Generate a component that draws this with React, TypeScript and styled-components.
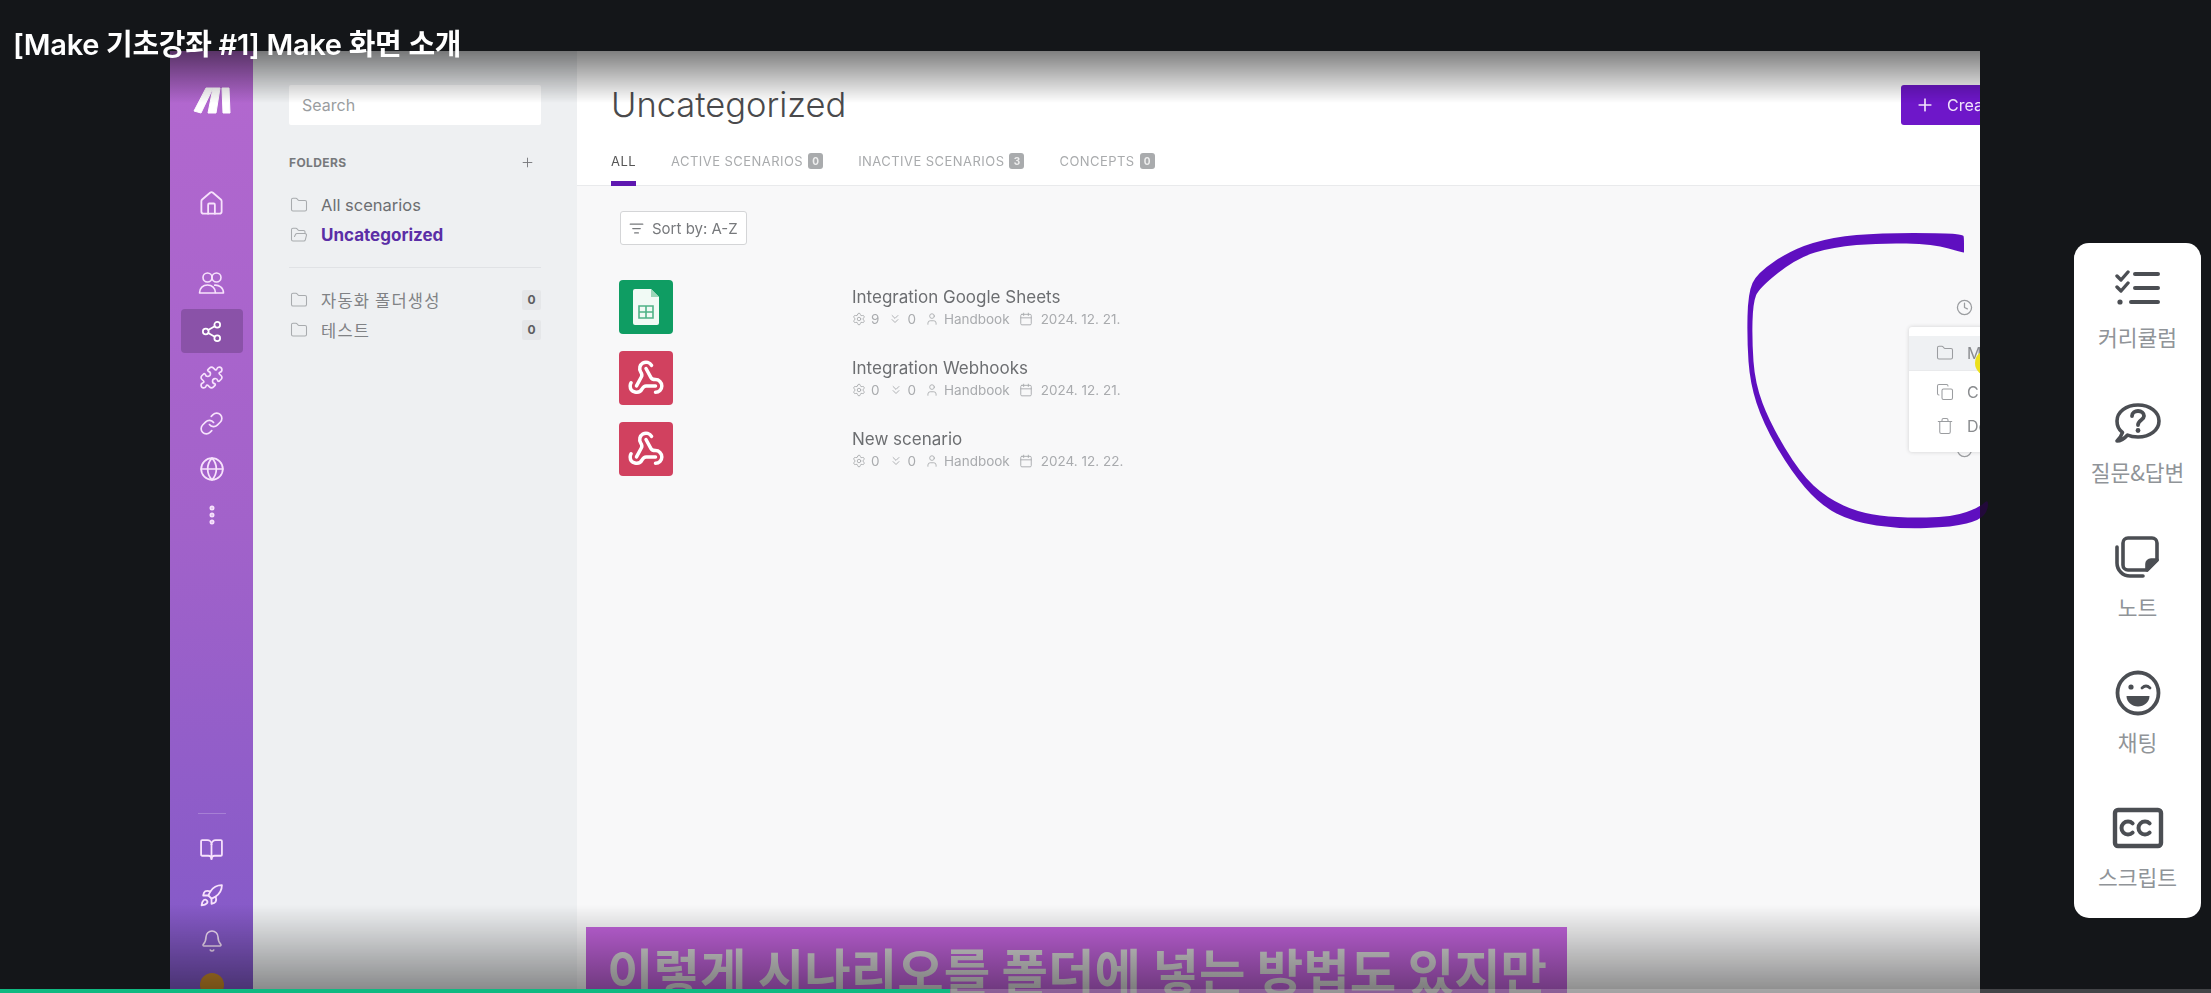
import React from 'react'
import styled, { createGlobalStyle } from 'styled-components'
import {
  BookOpen,
  Bell,
  Calendar,
  ChevronsDown,
  Clock,
  Copy,
  EllipsisVertical,
  Folder,
  FolderOpen,
  Globe,
  Home,
  Link,
  ListFilter,
  Plus,
  Puzzle,
  Rocket,
  Settings,
  Share2,
  Trash,
  User,
  Webhook,
} from 'lucide-react'

const UI_FONT = `Inter, "Noto Sans CJK KR", sans-serif`
const KR_FONT = `"Noto Sans CJK KR", "Noto Sans", sans-serif`

const GlobalStyle = createGlobalStyle`
  html, body {
    margin: 0;
    padding: 0;
    height: 100%;
    background: #141619;
    overflow: hidden;
  }
  * {
    box-sizing: border-box;
  }
`

const Page = styled.div`
  position: relative;
  display: flex;
  align-items: flex-start;
  width: 2211px;
  height: 993px;
  padding: 51px 0 0 170px;
  background: #141619;
  overflow: hidden;
`

const LessonTitle = styled.h1`
  position: absolute;
  z-index: 5;
  top: 26px;
  left: 13px;
  margin: 0;
  font-family: ${UI_FONT};
  font-size: 29px;
  line-height: 38px;
  font-weight: 600;
  letter-spacing: -0.3px;
  color: #fff;
`

const VideoFrame = styled.div`
  position: relative;
  flex: none;
  display: flex;
  width: 1810px;
  height: 942px;
  background: #f8f8f9;
  overflow: hidden;
`

const Blurred = styled.div`
  display: flex;
  width: 100%;
  height: 100%;
  filter: blur(0.6px);
`

const TopShade = styled.div`
  position: absolute;
  z-index: 3;
  top: 0;
  left: 0;
  right: 0;
  height: 52px;
  background: linear-gradient(to bottom, rgba(0, 0, 0, 0.5), rgba(0, 0, 0, 0));
`

const BottomShade = styled.div`
  position: absolute;
  z-index: 3;
  bottom: 0;
  left: 0;
  right: 0;
  height: 88px;
  background: linear-gradient(to bottom, rgba(0, 0, 0, 0), rgba(0, 0, 0, 0.44));
`

const Nav = styled.nav`
  flex: none;
  display: flex;
  flex-direction: column;
  align-items: center;
  width: 83px;
  height: 946px;
  padding-top: 36px;
  background: linear-gradient(to bottom, #b368cf 0%, #a262ca 50%, #8159c8 100%);
`

const LogoMark = styled.svg`
  display: block;
  width: 38px;
  height: 27px;
  margin-bottom: 67px;
`

const NavItem = styled.div<{ $active?: boolean; $gapAfter?: number }>`
  display: flex;
  align-items: center;
  justify-content: center;
  flex: none;
  width: 62px;
  height: 44px;
  margin-bottom: ${({ $gapAfter }) => $gapAfter ?? 2}px;
  border-radius: 4px;
  color: ${({ $active }) => ($active ? '#fff' : '#f7e2fc')};
  background: ${({ $active }) => ($active ? '#8a52a8' : 'transparent')};
`

const NavBottom = styled.div`
  margin-top: auto;
  display: flex;
  flex-direction: column;
  align-items: center;
`

const NavRule = styled.div`
  width: 28px;
  height: 1px;
  margin-bottom: 13px;
  background: rgba(255, 255, 255, 0.22);
`

const Avatar = styled.div`
  width: 24px;
  height: 24px;
  margin-top: 8px;
  border-radius: 50%;
  background: #c98a2a;
`

const FolderPanel = styled.aside`
  flex: none;
  width: 324px;
  padding: 34px 36px 0;
  background: #eef0f2;
  font-family: ${UI_FONT};
`

const SearchBox = styled.div`
  height: 40px;
  padding: 0 13px;
  border-radius: 2px;
  background: #fff;
  font-size: 16px;
  line-height: 40px;
  color: #9a9da0;
`

const FolderHead = styled.div`
  display: flex;
  align-items: center;
  justify-content: space-between;
  height: 20px;
  margin: 27px 0 18px;
  padding-right: 6px;
  font-size: 12px;
  font-weight: 700;
  letter-spacing: 0.4px;
  color: #77797c;
`

const FolderRow = styled.div<{ $active?: boolean }>`
  display: flex;
  align-items: center;
  gap: 13px;
  height: 30px;
  padding-left: 1px;
  font-size: ${({ $active }) => ($active ? 17 : 16.5)}px;
  font-weight: ${({ $active }) => ($active ? 700 : 400)};
  color: ${({ $active }) => ($active ? '#5a2ea6' : '#6c6e71')};
  & > svg {
    flex: none;
    color: #a8abae;
  }
`

const FolderName = styled.span`
  flex: 1;
  font-family: ${KR_FONT};
  font-weight: 400;
  font-size: 16.5px;
  letter-spacing: 1.2px;
  color: #808285;
`

const FolderCount = styled.span`
  width: 19px;
  height: 20px;
  border-radius: 2px;
  background: #e5e7e9;
  font-size: 12px;
  font-weight: 700;
  line-height: 20px;
  text-align: center;
  color: #5c5e61;
`

const PanelRule = styled.div`
  height: 1px;
  margin: 17px 0 17px;
  background: #e0e2e5;
`

const Main = styled.main`
  position: relative;
  flex: 1;
  min-width: 0;
  display: flex;
  flex-direction: column;
  font-family: ${UI_FONT};
`

const Header = styled.header`
  flex: none;
  height: 135px;
  padding: 34px 0 0 34px;
  background: #fff;
  border-bottom: 1px solid #e9eaec;
`

const HeaderTop = styled.div`
  display: flex;
  align-items: center;
  justify-content: space-between;
`

const PageTitle = styled.h2`
  margin: 0;
  font-size: 34.5px;
  line-height: 40px;
  font-weight: 300;
  color: #4a4a4c;
`

const CreateButton = styled.div`
  flex: none;
  display: flex;
  align-items: center;
  gap: 12px;
  width: 240px;
  height: 40px;
  margin-right: -161px;
  padding-left: 14px;
  border-radius: 3px;
  background: #6e17c9;
  font-size: 16px;
  white-space: nowrap;
  color: #f1e4fb;
`

const Tabs = styled.div`
  display: flex;
  gap: 35px;
  margin-top: 15px;
  height: 46px;
`

const Tab = styled.div<{ $active?: boolean }>`
  display: flex;
  align-items: flex-start;
  gap: 5px;
  height: 46px;
  padding-top: 12px;
  border-bottom: 5px solid ${({ $active }) => ($active ? '#5e17b0' : 'transparent')};
  font-size: 13px;
  line-height: 18px;
  letter-spacing: 0.45px;
  color: ${({ $active }) => ($active ? '#555' : '#a9abad')};
`

const TabCount = styled.span`
  width: 15px;
  height: 16px;
  margin-top: 1px;
  border-radius: 3px;
  background: #a9abad;
  font-size: 10px;
  font-weight: 700;
  line-height: 16px;
  letter-spacing: 0;
  text-align: center;
  color: #eee;
`

const Content = styled.section`
  flex: 1;
  padding: 25px 7px 0 42px;
  background: #f8f8f9;
`

const SortButton = styled.div`
  display: flex;
  align-items: center;
  gap: 8px;
  width: 127px;
  height: 34px;
  margin-left: 1px;
  padding-left: 8px;
  border: 1px solid #d4d5d7;
  border-radius: 3px;
  background: #fff;
  font-size: 15px;
  white-space: nowrap;
  color: #77797c;
`

const ScenarioList = styled.div`
  display: flex;
  flex-direction: column;
  gap: 17px;
  margin-top: 35px;
`

const ScenarioRow = styled.div`
  display: flex;
  align-items: center;
  height: 54px;
`

const AppTile = styled.div<{ $color: string }>`
  flex: none;
  display: flex;
  align-items: center;
  justify-content: center;
  width: 54px;
  height: 54px;
  margin-right: 179px;
  border-radius: 4px;
  background: ${({ $color }) => $color};
  color: #fff;
`

const ScenarioInfo = styled.div`
  display: flex;
  flex-direction: column;
  gap: 4px;
  flex: 1;
`

const ScenarioName = styled.div`
  font-size: 17px;
  line-height: 20px;
  color: #6c6e71;
`

const MetaRow = styled.div`
  display: flex;
  align-items: center;
  gap: 9px;
  font-size: 13.5px;
  line-height: 16px;
  color: #a9abae;
`

const MetaItem = styled.span<{ $gap?: number }>`
  display: flex;
  align-items: center;
  gap: ${({ $gap }) => $gap ?? 5}px;
`

const RowClock = styled.div`
  flex: none;
  display: flex;
  color: #9b9da0;
`

const ActionMenu = styled.div`
  position: absolute;
  z-index: 2;
  top: 276px;
  left: 1332px;
  width: 240px;
  padding: 9px 0 9px;
  border-radius: 3px;
  background: #fff;
  box-shadow: 0 0 4px rgba(0, 0, 0, 0.16);
  font-size: 16px;
  color: #8a8c8f;
`

const MenuRow = styled.div<{ $hover?: boolean }>`
  display: flex;
  align-items: center;
  gap: 13px;
  height: ${({ $hover }) => ($hover ? 35 : 34)}px;
  padding-left: 27px;
  background: ${({ $hover }) => ($hover ? '#eff1f3' : 'transparent')};
  border-bottom: ${({ $hover }) => ($hover ? '1px solid #e9eaec' : 'none')};
  margin-bottom: ${({ $hover }) => ($hover ? 4 : 0)}px;
  & > svg {
    color: #9b9da0;
  }
`

const CursorDot = styled.div`
  position: absolute;
  top: 23px;
  left: 66px;
  width: 26px;
  height: 26px;
  border-radius: 50%;
  background: #ece01c;
`

const CaptionBar = styled.div`
  position: absolute;
  z-index: 2;
  left: 416px;
  top: 876px;
  width: 981px;
  height: 70px;
  padding: 12px 0 0 21px;
  background: #c263dc;
  overflow: hidden;
  font-family: ${KR_FONT};
  font-size: 50.5px;
  line-height: 60px;
  font-weight: 700;
  white-space: nowrap;
  color: #d8d8d8;
`

const SideRail = styled.aside`
  flex: none;
  display: flex;
  flex-direction: column;
  width: 127px;
  height: 675px;
  margin: 192px 0 0 94px;
  padding-top: 22px;
  border-radius: 15px;
  background: #fff;
`

const RailItem = styled.div`
  flex: none;
  display: flex;
  flex-direction: column;
  align-items: center;
  height: 135px;
`

const RailIcon = styled.div`
  display: flex;
  align-items: center;
  justify-content: center;
  height: 46px;
  margin-bottom: 14px;
  color: #4b4e53;
`

const RailLabel = styled.span`
  font-family: ${KR_FONT};
  font-size: 21.5px;
  line-height: 24px;
  white-space: nowrap;
  color: #909498;
`

const Annotation = styled.svg`
  position: absolute;
  z-index: 4;
  top: 0;
  left: 0;
  pointer-events: none;
`

const ProgressTrack = styled.div`
  position: absolute;
  z-index: 6;
  left: 0;
  right: 0;
  bottom: 0;
  height: 4px;
  background: rgba(255, 255, 255, 0.2);
`

const ProgressFill = styled.div`
  height: 100%;
  background: #10b981;
`

function MakeLogo() {
  return (
    <LogoMark viewBox="0 0 38 27" fill="#fff" stroke="#fff" strokeWidth="1" strokeLinejoin="round">
      <polygon points="1,24 13,1 20,1 8,26" />
      <polygon points="15,26 20,1 27,1 23,26" />
      <polygon points="29,1 36,1 37,26 30,26" />
    </LogoMark>
  )
}

function TeamIcon() {
  return (
    <svg width="27" height="27" viewBox="0 0 27 27" fill="none" stroke="currentColor" strokeWidth="1.6" strokeLinejoin="round">
      <circle cx="9.5" cy="7.5" r="4.5" />
      <circle cx="18.5" cy="7.5" r="4.5" />
      <path d="M1.5 23c0-5 3.5-8 8-8s8 3 8 8Z" />
      <path d="M16 15.200c5-.7 9.500 2.300 9.500 7.800H17.500" />
    </svg>
  )
}

function SheetsGlyph() {
  return (
    <svg width="26" height="36" viewBox="0 0 26 36">
      <path d="M2 0H18L26 8V34a2 2 0 0 1-2 2H2a2 2 0 0 1-2-2V2a2 2 0 0 1 2-2Z" fill="#f1faf5" />
      <path d="M18 0L26 8H18Z" fill="#9bd6b8" />
      <path d="M6 17H20V29H6ZM6 23H20M13 17V29" fill="none" stroke="#4fb387" strokeWidth="1.6" />
    </svg>
  )
}

function ChecklistIcon() {
  return (
    <svg width="46" height="38" viewBox="0 0 46 38" fill="none" stroke="currentColor" strokeWidth="4" strokeLinecap="round" strokeLinejoin="round">
      <path d="M2 7l4 4 7-8" strokeWidth="3.4" />
      <path d="M2 18l4 4 7-8" strokeWidth="3.4" />
      <circle cx="5" cy="33" r="2.6" fill="currentColor" stroke="none" />
      <path d="M20 5H43M20 19H43M16 33H43" />
    </svg>
  )
}

function QuestionIcon() {
  return (
    <svg width="46" height="40" viewBox="0 0 46 40" fill="none" stroke="currentColor" strokeWidth="3.6" strokeLinecap="round" strokeLinejoin="round">
      <path d="M7.5 29.5C3.5 26.5 2 22 2 18 2 9 11 2 23 2s21 7 21 16-9 16-21 16c-4 0-7.5-.5-10.5-2-3.5 4-7.5 6-10.5 6 2.5-2.5 4.5-5.5 5.5-8.5Z" />
      <path d="M17 13c0-3.5 3-5 6-5 3.5 0 6 2 6 5 0 4-6 4-6 9" strokeWidth="3.8" />
      <circle cx="23" cy="27.5" r="2.4" fill="currentColor" stroke="none" />
    </svg>
  )
}

function NoteIcon() {
  return (
    <svg width="46" height="44" viewBox="0 0 46 44" fill="none" stroke="currentColor" strokeWidth="3.6" strokeLinecap="round" strokeLinejoin="round">
      <path d="M13 2H37a5 5 0 0 1 5 5V24L32 34H13a5 5 0 0 1-5-5V7a5 5 0 0 1 5-5Z" />
      <path d="M42 24H36a4 4 0 0 0-4 4V34Z" fill="currentColor" />
      <path d="M2 11V27A13 13 0 0 0 15 40H28" />
    </svg>
  )
}

function WinkIcon() {
  return (
    <svg width="46" height="46" viewBox="-23 -23 46 46" fill="none" stroke="currentColor" strokeWidth="3.8" strokeLinecap="round">
      <circle r="20.5" />
      <circle cx="-7" cy="-6" r="2.6" fill="currentColor" stroke="none" />
      <path d="M4-5q4-4 8 0" strokeWidth="2.8" />
      <path d="M-11.5 3H11.5C11.5 9 6 13.5 0 13.5S-11.5 9-11.5 3Z" fill="currentColor" stroke="none" />
    </svg>
  )
}

function CaptionsIcon() {
  return (
    <svg width="52" height="42" viewBox="0 0 52 42" fill="none" stroke="currentColor" strokeWidth="4">
      <rect x="3" y="3" width="46" height="36" rx="3" strokeWidth="4.4" />
      <path d="M20.6 16.4A6.5 6.5 0 1 0 20.6 25.6" strokeLinecap="round" />
      <path d="M37.6 16.4A6.5 6.5 0 1 0 37.6 25.6" strokeLinecap="round" />
    </svg>
  )
}

// midpoint smoothing so the hand-drawn circle doesn't look polygonal
function smoothPath(points: number[][]) {
  const n = points.length
  const mid = (a: number[], b: number[]) => [(a[0] + b[0]) / 2, (a[1] + b[1]) / 2]
  const start = mid(points[n - 1], points[0])
  let d = `M${start[0]} ${start[1]}`
  points.forEach((p, i) => {
    const m = mid(p, points[(i + 1) % n])
    d += `Q${p[0]} ${p[1]} ${m[0]} ${m[1]}`
  })
  return d + 'Z'
}

const circleStroke = [
  [1964, 237], [1963, 235], [1947, 233], [1880, 233], [1833, 237], [1793, 249], [1757, 273], [1748, 293], [1747, 340],
  [1750, 383], [1763, 423], [1790, 470], [1820, 505], [1853, 522], [1900, 529], [1953, 527], [1980, 520],
  [1988, 510], [1988, 499], [1980, 507], [1953, 517], [1900, 518], [1860, 513], [1827, 498], [1800, 473],
  [1770, 423], [1755, 383], [1752, 340], [1753, 303], [1759, 288], [1797, 258], [1833, 247], [1880, 243],
  [1933, 244], [1964, 253], [1964, 252],
]

const scenarios = [
  { name: 'Integration Google Sheets', color: '#0f9d63', sheets: true, modules: 9, date: '2024. 12. 21.' },
  { name: 'Integration Webhooks', color: '#d1415f', sheets: false, modules: 0, date: '2024. 12. 21.' },
  { name: 'New scenario', color: '#d1415f', sheets: false, modules: 0, date: '2024. 12. 22.' },
]

const railItems = [
  { label: '커리큘럼', icon: <ChecklistIcon /> },
  { label: '질문&답변', icon: <QuestionIcon /> },
  { label: '노트', icon: <NoteIcon /> },
  { label: '채팅', icon: <WinkIcon /> },
  { label: '스크립트', icon: <CaptionsIcon /> },
]

export default function App() {
  return (
    <Page>
      <GlobalStyle />
      <LessonTitle>[Make 기초강좌 #1] Make 화면 소개</LessonTitle>

      <VideoFrame>
        <Blurred>
          <Nav>
            <MakeLogo />
            <NavItem $gapAfter={36}><Home size={27} strokeWidth={1.6} /></NavItem>
            <NavItem $gapAfter={4}><TeamIcon /></NavItem>
            <NavItem $active><Share2 size={23} strokeWidth={1.8} /></NavItem>
            <NavItem><Puzzle size={25} strokeWidth={1.6} /></NavItem>
            <NavItem><Link size={25} strokeWidth={1.6} /></NavItem>
            <NavItem><Globe size={26} strokeWidth={1.6} /></NavItem>
            <NavItem><EllipsisVertical size={24} strokeWidth={3} /></NavItem>
            <NavBottom>
              <NavRule />
              <NavItem><BookOpen size={25} strokeWidth={1.7} /></NavItem>
              <NavItem><Rocket size={25} strokeWidth={1.7} /></NavItem>
              <NavItem><Bell size={24} strokeWidth={1.6} /></NavItem>
              <Avatar />
            </NavBottom>
          </Nav>

          <FolderPanel>
            <SearchBox>Search</SearchBox>
            <FolderHead>
              FOLDERS
              <Plus size={15} strokeWidth={1.5} />
            </FolderHead>
            <FolderRow><Folder size={18} strokeWidth={1.4} />All scenarios</FolderRow>
            <FolderRow $active><FolderOpen size={18} strokeWidth={1.4} />Uncategorized</FolderRow>
            <PanelRule />
            <FolderRow>
              <Folder size={18} strokeWidth={1.4} />
              <FolderName>자동화 폴더생성</FolderName>
              <FolderCount>0</FolderCount>
            </FolderRow>
            <FolderRow>
              <Folder size={18} strokeWidth={1.4} />
              <FolderName>테스트</FolderName>
              <FolderCount>0</FolderCount>
            </FolderRow>
          </FolderPanel>

          <Main>
            <Header>
              <HeaderTop>
                <PageTitle>Uncategorized</PageTitle>
                <CreateButton>
                  <Plus size={20} strokeWidth={2} />
                  Create a new scenario
                </CreateButton>
              </HeaderTop>
              <Tabs>
                <Tab $active>ALL</Tab>
                <Tab>ACTIVE SCENARIOS<TabCount>0</TabCount></Tab>
                <Tab>INACTIVE SCENARIOS<TabCount>3</TabCount></Tab>
                <Tab>CONCEPTS<TabCount>0</TabCount></Tab>
              </Tabs>
            </Header>

            <Content>
              <SortButton>
                <ListFilter size={15} strokeWidth={2} />
                Sort by: A-Z
              </SortButton>
              <ScenarioList>
                {scenarios.map((s) => (
                  <ScenarioRow key={s.name}>
                    <AppTile $color={s.color}>
                      {s.sheets ? <SheetsGlyph /> : <Webhook size={38} strokeWidth={2.2} />}
                    </AppTile>
                    <ScenarioInfo>
                      <ScenarioName>{s.name}</ScenarioName>
                      <MetaRow>
                        <MetaItem><Settings size={14} strokeWidth={1.5} />{s.modules}</MetaItem>
                        <MetaItem><ChevronsDown size={14} strokeWidth={1.6} />0</MetaItem>
                        <MetaItem><User size={14} strokeWidth={1.5} />Handbook</MetaItem>
                        <MetaItem $gap={8}><Calendar size={14} strokeWidth={1.6} />{s.date}</MetaItem>
                      </MetaRow>
                    </ScenarioInfo>
                    <RowClock><Clock size={17} strokeWidth={1.8} /></RowClock>
                  </ScenarioRow>
                ))}
              </ScenarioList>
            </Content>

            <ActionMenu>
              <MenuRow $hover><Folder size={18} strokeWidth={1.4} />Move</MenuRow>
              <MenuRow><Copy size={18} strokeWidth={1.4} />Clone</MenuRow>
              <MenuRow><Trash size={18} strokeWidth={1.4} />Delete</MenuRow>
              <CursorDot />
            </ActionMenu>
          </Main>
        </Blurred>

        <CaptionBar>이렇게 시나리오를 폴더에 넣는 방법도 있지만</CaptionBar>
        <TopShade />
        <BottomShade />
      </VideoFrame>

      <SideRail>
        {railItems.map((item) => (
          <RailItem key={item.label}>
            <RailIcon>{item.icon}</RailIcon>
            <RailLabel>{item.label}</RailLabel>
          </RailItem>
        ))}
      </SideRail>

      <Annotation width="2211" height="993" viewBox="0 0 2211 993">
        <defs>
          <linearGradient id="inkEdge" gradientUnits="userSpaceOnUse" x1="1740" y1="0" x2="1990" y2="0">
            <stop offset="0.96" stopColor="#5f0fc0" />
            <stop offset="0.96" stopColor="#22093a" />
          </linearGradient>
        </defs>
        <path d={smoothPath(circleStroke)} fill="url(#inkEdge)" />
      </Annotation>

      <ProgressTrack>
        <ProgressFill style={{ width: `${(950 / 2211) * 100}%` }} />
      </ProgressTrack>
    </Page>
  )
}
